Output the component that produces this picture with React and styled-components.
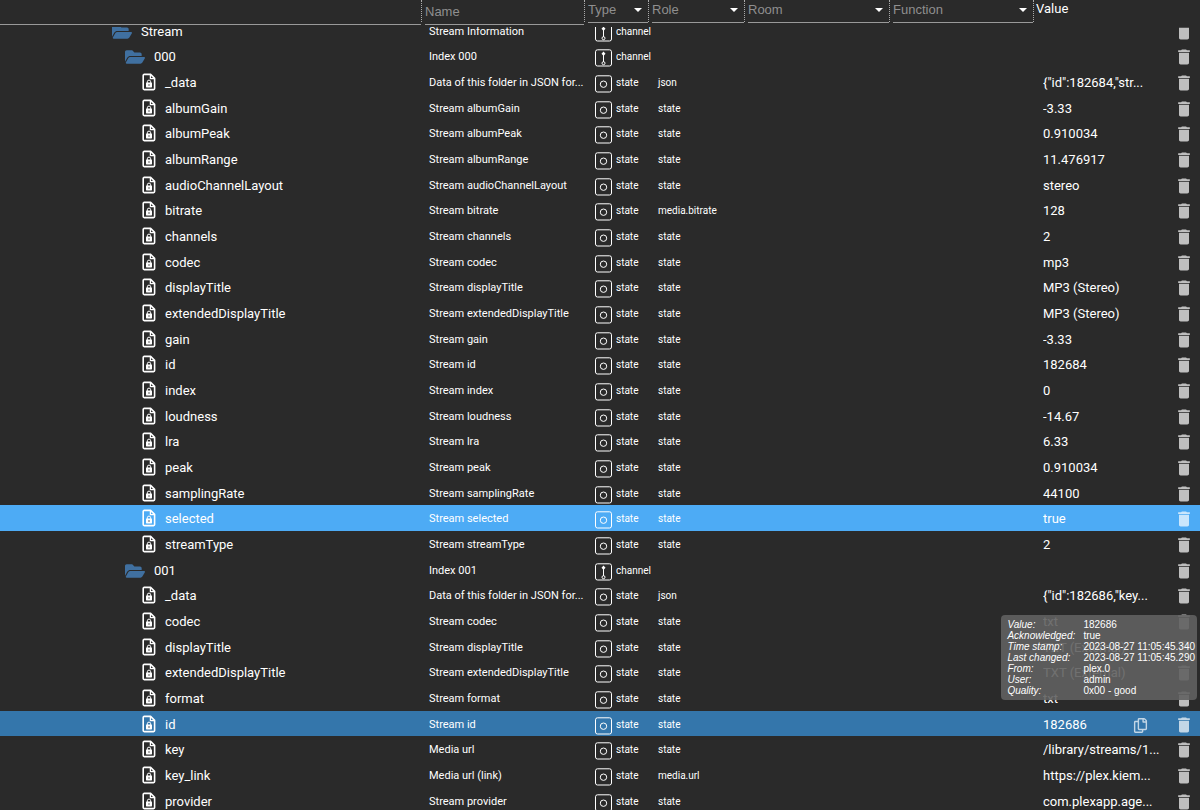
import React from 'react';
import styled, { createGlobalStyle } from 'styled-components';
import { FaFolderOpen, FaRegCopy } from 'react-icons/fa';
import { MdDelete } from 'react-icons/md';

const state = (id, name, value, role = 'state') => ({ id, name, value, role, type: 'state' });
const channel = (id, name, level) => ({ id, name, level, type: 'channel' });

const objects = [
    channel('Stream', 'Stream Information', 1),
    channel('000', 'Index 000', 2),
    state('_data', 'Data of this folder in JSON for...', '{"id":182684,"str...', 'json'),
    state('albumGain', 'Stream albumGain', '-3.33'),
    state('albumPeak', 'Stream albumPeak', '0.910034'),
    state('albumRange', 'Stream albumRange', '11.476917'),
    state('audioChannelLayout', 'Stream audioChannelLayout', 'stereo'),
    state('bitrate', 'Stream bitrate', '128', 'media.bitrate'),
    state('channels', 'Stream channels', '2'),
    state('codec', 'Stream codec', 'mp3'),
    state('displayTitle', 'Stream displayTitle', 'MP3 (Stereo)'),
    state('extendedDisplayTitle', 'Stream extendedDisplayTitle', 'MP3 (Stereo)'),
    state('gain', 'Stream gain', '-3.33'),
    state('id', 'Stream id', '182684'),
    state('index', 'Stream index', '0'),
    state('loudness', 'Stream loudness', '-14.67'),
    state('lra', 'Stream lra', '6.33'),
    state('peak', 'Stream peak', '0.910034'),
    state('samplingRate', 'Stream samplingRate', '44100'),
    { ...state('selected', 'Stream selected', 'true'), selected: true },
    state('streamType', 'Stream streamType', '2'),
    channel('001', 'Index 001', 2),
    state('_data', 'Data of this folder in JSON for...', '{"id":182686,"key...', 'json'),
    state('codec', 'Stream codec', 'txt'),
    state('displayTitle', 'Stream displayTitle', 'TXT (External)'),
    state('extendedDisplayTitle', 'Stream extendedDisplayTitle', 'TXT (External)'),
    state('format', 'Stream format', 'txt'),
    { ...state('id', 'Stream id', '182686'), active: true },
    state('key', 'Media url', '/library/streams/1...'),
    state('key_link', 'Media url (link)', 'https://plex.kiem...', 'media.url'),
    state('provider', 'Stream provider', 'com.plexapp.age...'),
];

const details = [
    ['Value', '182686'],
    ['Acknowledged', 'true'],
    ['Time stamp', '2023-08-27 11:05:45.340'],
    ['Last changed', '2023-08-27 11:05:45.290'],
    ['From', 'plex.0'],
    ['User', 'admin'],
    ['Quality', '0x00 - good'],
];

const StateFileIcon = () => (
    <svg width="14" height="18" viewBox="0 0 14 18" fill="none" stroke="currentColor" strokeWidth="1.6" strokeLinejoin="round">
        <path d="M2.2 1.4h6.4l4 4v10.2a1 1 0 0 1-1 1H2.2a1 1 0 0 1-1-1V2.4a1 1 0 0 1 1-1z" />
        <path d="M8.4 1.6v4h4" strokeWidth="1.3" />
        <path d="M5.3 10V8.8a1.7 1.7 0 0 1 3.4 0V10" strokeWidth="1" />
        <rect x="4" y="9.6" width="6" height="4.8" rx="0.6" fill="currentColor" stroke="none" />
        <circle cx="7" cy="12" r="0.7" fill="#2a2a2a" stroke="none" />
    </svg>
);

const StateIcon = () => (
    <svg width="18" height="18" viewBox="0 0 18 18" fill="none" stroke="currentColor">
        <rect x="1.5" y="0.8" width="16" height="16.2" rx="2" />
        <circle cx="9.5" cy="9.2" r="3.2" />
    </svg>
);

const ChannelIcon = () => (
    <svg width="18" height="18" viewBox="0 0 18 18" fill="none" stroke="currentColor">
        <rect x="1.5" y="0.8" width="16" height="16.2" rx="2" />
        <path d="M9.5 3v10" />
        <path d="M9.5 2.6l2 2.2-2 2.2-2-2.2z" fill="currentColor" stroke="none" />
        <circle cx="9.5" cy="14.2" r="1.5" />
    </svg>
);

const Filter = ({ label }) => (
    <FilterBox>
        <FilterSelect aria-label={label} defaultValue="">
            <option value="">{label}</option>
        </FilterSelect>
        <Arrow viewBox="0 0 8 4"><path d="M0 0h8L4 4z" fill="currentColor" /></Arrow>
    </FilterBox>
);

const ObjectRow = ({ item }) => {
    const isChannel = item.type === 'channel';

    return (
        <Row $selected={item.selected} $active={item.active}>
            <IdCell $level={isChannel ? item.level : 3}>
                <IdContent>
                    {isChannel ? <FolderIcon /> : <FileIconBox><StateFileIcon /></FileIconBox>}
                    {item.id}
                </IdContent>
            </IdCell>
            <NameCell>{item.name}</NameCell>
            <TypeCell>
                <TypeContent>
                    {isChannel ? <ChannelIcon /> : <StateIcon />}
                    {item.type}
                </TypeContent>
            </TypeCell>
            <RoleCell>{item.role}</RoleCell>
            <Cell />
            <Cell />
            <ValueCell>
                <ValueContent>
                    <ValueText $short={item.active}>{item.value}</ValueText>
                    {item.active && <IconButton aria-label="Copy value"><FaRegCopy size={15} /></IconButton>}
                    <DeleteButton aria-label={`Delete ${item.id}`}><MdDelete size={20} /></DeleteButton>
                </ValueContent>
                {item.active && (
                    <Tooltip role="tooltip">
                        {details.map(([term, text]) => (
                            <React.Fragment key={term}>
                                <dt>{term}:</dt>
                                <dd>{text}</dd>
                            </React.Fragment>
                        ))}
                    </Tooltip>
                )}
            </ValueCell>
        </Row>
    );
};

const App = () => (
    <Browser>
        <GlobalStyle />
        <Head>
            <HeadRow>
                <HeadCell $line />
                <HeadCell>
                    <NameInput aria-label="Name" placeholder="Name" />
                </HeadCell>
                <HeadCell><Filter label="Type" /></HeadCell>
                <HeadCell><Filter label="Role" /></HeadCell>
                <HeadCell><Filter label="Room" /></HeadCell>
                <HeadCell><Filter label="Function" /></HeadCell>
                <ValueHead>Value</ValueHead>
            </HeadRow>
        </Head>
        <Body>
            {objects.map((item, i) => <ObjectRow key={i} item={item} />)}
        </Body>
    </Browser>
);

export default App;

const GlobalStyle = createGlobalStyle`
    * {
        box-sizing: border-box;
    }
    body {
        margin: 0;
        background: #2a2a2a;
        color: #fff;
        font-family: Roboto, sans-serif;
        font-size: 13px;
    }
    input, select, button {
        margin: 0;
        border: none;
        border-radius: 0;
        background: none;
        outline: none;
    }
`

const Browser = styled.table`
    display: flex;
    flex-direction: column;
    height: 100vh;
    overflow: hidden;
`

const Head = styled.thead`
    display: block;
    flex-shrink: 0;
    height: 27px;
`

const Body = styled.tbody`
    display: flex;
    flex-direction: column;
    justify-content: flex-start;
    flex: 1;
    min-height: 0;
    overflow: hidden;
    /* the list is scrolled a little under the header */
    > tr:first-child {
        margin-top: -9px;
    }
    > tr:nth-child(3n + 1) {
        height: 25px;
    }
`

const columns = `
    display: grid;
    grid-template-columns: minmax(0, 1fr) 163px 64px 96px 145px 144px 166px;
`

const HeadRow = styled.tr`
    ${columns}
`

const HeadCell = styled.th`
    height: 25px;
    padding: 0 1px 0 3px;
    text-align: left;
    font-weight: 400;
    background: linear-gradient(#999, #999) ${(props) => (props.$line ? '0 24px / calc(100% - 1px) 1px no-repeat' : '0 0 / 0 0 no-repeat')};
    position: relative;
    &::after {
        content: '';
        position: absolute;
        top: 0;
        right: 0;
        height: 22px;
        border-right: 1px dotted #aaa;
    }
`

const NameInput = styled.input`
    width: 100%;
    height: 25px;
    padding: 0 0 2px;
    border-bottom: 1px solid #999;
    color: #fff;
    font-family: "Liberation Sans", Arial, sans-serif;
    font-size: 13px;
    &::placeholder {
        color: #8f8f8f;
    }
`

const FilterBox = styled.div`
    display: flex;
    align-items: flex-start;
    height: 23px;
    border-bottom: 1px solid #999;
`

const FilterSelect = styled.select`
    flex: 1;
    min-width: 0;
    height: 18px;
    padding: 0;
    appearance: none;
    color: #8f8f8f;
    font-family: "Liberation Sans", Arial, sans-serif;
    font-size: 13px;
`

const Arrow = styled.svg`
    width: 8px;
    height: 4px;
    margin: 8px 6px 0 0;
    flex-shrink: 0;
    pointer-events: none;
`

const ValueHead = styled.th`
    padding: 0 2px;
    text-align: left;
    font-weight: 400;
    line-height: 17px;
`

const Row = styled.tr`
    ${columns}
    flex-shrink: 0;
    height: 26px;
    background: ${(props) => (props.$selected ? '#4dabf5' : props.$active ? '#3476ab' : 'transparent')};
`

const Cell = styled.td`
    padding: 0;
    line-height: 27px;
    white-space: nowrap;
    overflow: hidden;
    text-overflow: ellipsis;
`

const indent = { 1: 112, 2: 125, 3: 137 }

const IdCell = styled(Cell)`
    padding-left: ${(props) => indent[props.$level]}px;
`

const IdContent = styled.div`
    display: flex;
    align-items: center;
    gap: 8px;
    height: 27px;
`

const FolderIcon = styled(FaFolderOpen)`
    width: 20px;
    height: 18px;
    margin-right: 1px;
    color: #4070a0;
`

const FileIconBox = styled.span`
    display: flex;
    justify-content: center;
    width: 20px;
    padding: 0 0 1px 3px;
`

const NameCell = styled(Cell)`
    padding-left: 7px;
    font-size: 11px;
`

const TypeCell = styled(Cell)`
    padding-left: 9px;
    font-size: 10px;
    overflow: visible;
`

const TypeContent = styled.div`
    display: flex;
    align-items: center;
    gap: 4px;
    height: 27px;
    svg {
        flex-shrink: 0;
        margin-top: 2px;
    }
`

const RoleCell = styled(Cell)`
    padding-left: 9px;
    font-size: 10px;
`

const ValueCell = styled(Cell)`
    padding: 0 6px 0 9px;
    position: relative;
    overflow: visible;
`

const ValueContent = styled.div`
    display: flex;
    align-items: center;
    height: 27px;
`

const ValueText = styled.span`
    width: ${(props) => (props.$short ? 90 : 120)}px;
    overflow: hidden;
    text-overflow: ellipsis;
`

const IconButton = styled.button`
    display: flex;
    padding: 1px 0 0;
    color: rgba(255, 255, 255, 0.7);
    cursor: pointer;
`

const DeleteButton = styled(IconButton)`
    margin-left: auto;
`

const Tooltip = styled.dl`
    position: absolute;
    right: 3px;
    bottom: 38px;
    display: grid;
    grid-template-columns: 76px auto;
    margin: 0;
    padding: 4px 2px 4px 6px;
    border-radius: 4px;
    background: rgba(97, 97, 97, 0.9);
    font-family: "Liberation Sans", Arial, sans-serif;
    font-size: 10px;
    line-height: 11px;
    dt {
        font-style: italic;
    }
    dd {
        margin: 0;
    }
`
